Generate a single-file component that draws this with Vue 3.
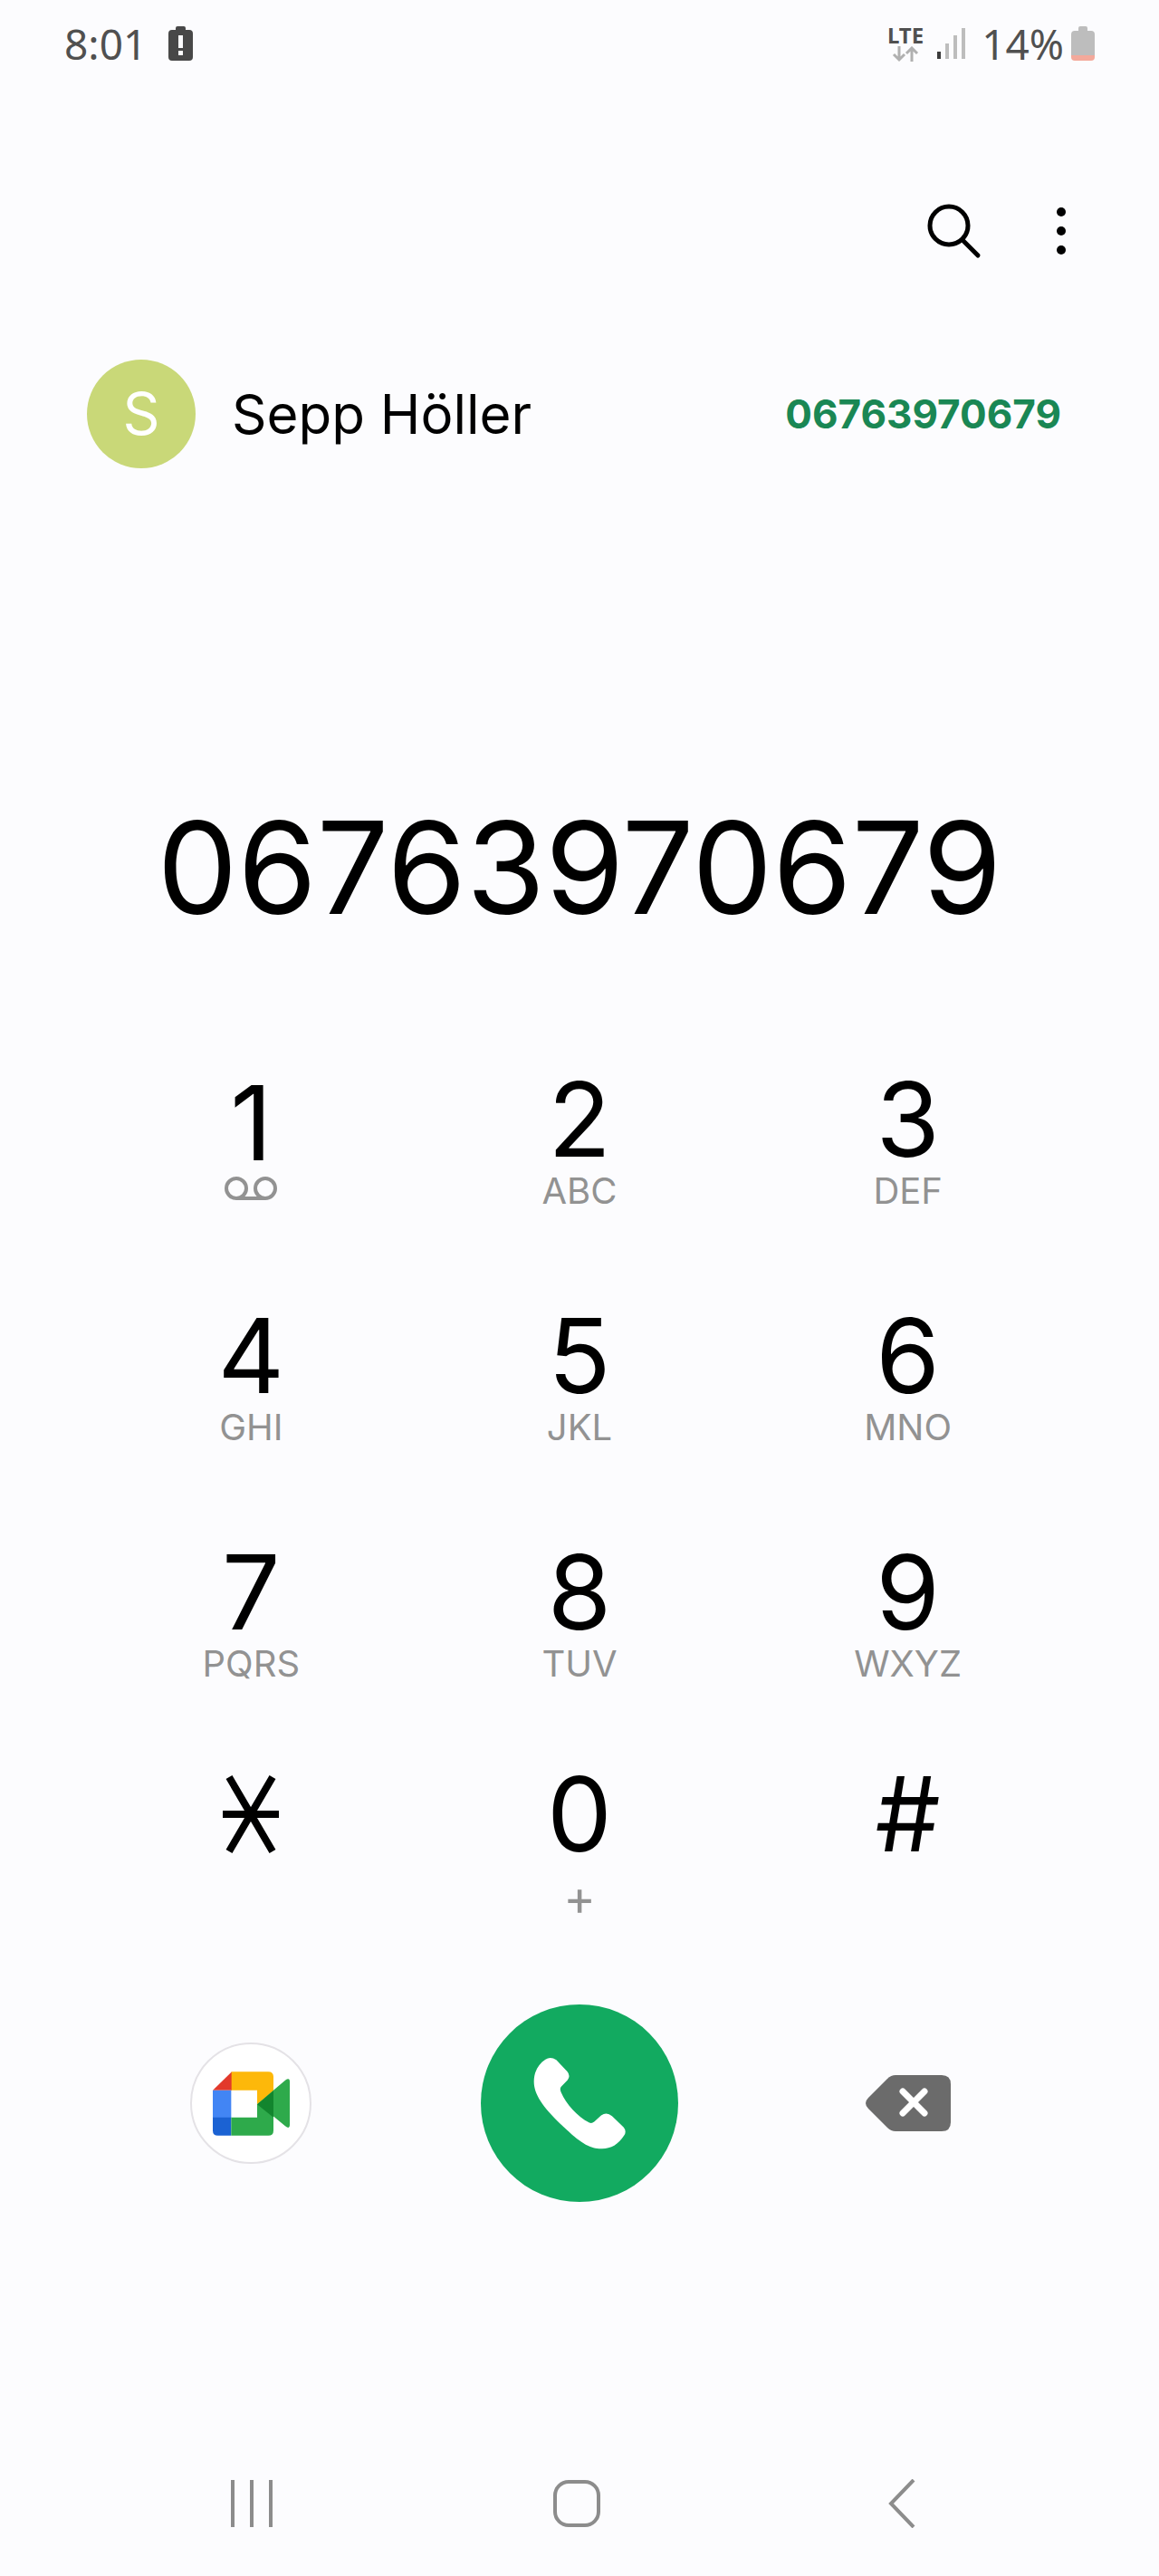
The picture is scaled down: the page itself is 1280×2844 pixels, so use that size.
<script setup>
import { ref } from 'vue'

const number = ref('06763970679')
const keys = [
  { digit: '1', voicemail: true },
  { digit: '2', letters: 'ABC' },
  { digit: '3', letters: 'DEF' },
  { digit: '4', letters: 'GHI' },
  { digit: '5', letters: 'JKL' },
  { digit: '6', letters: 'MNO' },
  { digit: '7', letters: 'PQRS' },
  { digit: '8', letters: 'TUV' },
  { digit: '9', letters: 'WXYZ' },
  { digit: '*', bottom: true },
  { digit: '0', letters: '+', bottom: true },
  { digit: '#', bottom: true }
]

function press(digit) {
  number.value += digit
}
function erase() {
  number.value = number.value.slice(0, -1)
}
</script>

<template>
  <div class="phone">
    <header class="status">
      <div class="status-side">
        <span class="status-text">8:01</span>
        <svg class="alert" viewBox="0 0 27 38" aria-hidden="true">
          <path d="M8 4V2Q8 0 10 0H17Q19 0 19 2V4H23Q27 4 27 8V34Q27 38 23 38H4Q0 38 0 34V8Q0 4 4 4Z" fill="#484848" />
          <path d="M11 10H16V24H11ZM11 27H16V32H11Z" fill="#fcfcfe" />
        </svg>
      </div>
      <div class="status-side">
        <div class="network">
          <span class="lte">LTE</span>
          <svg class="arrows" viewBox="0 0 30 18" aria-hidden="true">
            <path d="M8 0V15M2 9L8 15L14 9M22 17V2M16 8L22 2L28 8" fill="none" stroke="#b0b0b0" stroke-width="3" />
          </svg>
        </div>
        <svg class="signal" viewBox="0 0 34 34" aria-hidden="true">
          <path d="M1 26H5V34H1Z" fill="#3c3c3c" />
          <path d="M10 17H14V34H10ZM19 8H23V34H19ZM28 0H32V34H28Z" fill="#bdbdbd" />
        </svg>
        <span class="status-text">14%</span>
        <svg class="battery" viewBox="0 0 26 38" aria-hidden="true">
          <path d="M8 5V2Q8 0 10 0H16Q18 0 18 2V5H22Q26 5 26 9V32H0V9Q0 5 4 5Z" fill="#bdbdbd" />
          <path d="M0 32H26V34Q26 38 22 38H4Q0 38 0 34Z" fill="#f3a99b" />
        </svg>
      </div>
    </header>

    <div class="toolbar">
      <button class="icon-button" aria-label="Search">
        <svg class="search" viewBox="0 0 60 62">
          <circle cx="24" cy="25" r="21" fill="none" stroke="#000" stroke-width="5" />
          <path d="M39 41L56 58" stroke="#000" stroke-width="5" stroke-linecap="round" />
        </svg>
      </button>
      <button class="icon-button" aria-label="More options">
        <svg class="dots" viewBox="0 0 12 54">
          <circle cx="6" cy="6" r="5" />
          <circle cx="6" cy="27" r="5" />
          <circle cx="6" cy="48" r="5" />
        </svg>
      </button>
    </div>

    <main class="dialer">
      <a class="contact" href="#">
        <span class="avatar">S</span>
        <span class="name">Sepp Höller</span>
        <span class="match">06763970679</span>
      </a>

      <output class="number">{{ number }}</output>

      <div class="keypad">
        <button v-for="key in keys" :key="key.digit" class="key" :aria-label="key.digit" @click="press(key.digit)">
          <svg v-if="key.digit === '*'" class="star" viewBox="0 0 64 114">
            <path d="M1 57H63M8 16L56 98M56 16L8 98" stroke="#000" stroke-width="8" />
          </svg>
          <span v-else class="digit">{{ key.digit }}</span>
          <svg v-if="key.voicemail" class="voicemail" viewBox="0 0 60 36">
            <circle cx="14" cy="15" r="11" />
            <circle cx="46" cy="15" r="11" />
            <path d="M14 26H46" />
          </svg>
          <span v-else class="letters" :class="{ tall: key.bottom, plus: key.letters === '+' }">{{ key.letters }}</span>
        </button>
      </div>

      <div class="actions">
        <button class="meet" aria-label="Video call">
          <svg class="meet-logo" viewBox="0 0 255 212">
            <path d="M0 62L63 0V62Z" fill="#e2392b" />
            <path d="M62 0H184Q201 0 201 17V64L147 108V62H62Z" fill="#fdb80a" />
            <path d="M0 62H61V153H0Z" fill="#4285f4" />
            <path d="M0 152H61V212H17Q0 212 0 195Z" fill="#1b62d3" />
            <path d="M61 152H147V108L201 62L240 29Q255 18 255 34V176Q255 192 240 180L201 148V195Q201 212 184 212H61Z" fill="#2eaa4b" />
            <path d="M147 108L201 63V152Z" fill="#12852e" />
          </svg>
        </button>
        <button class="call" aria-label="Call">
          <svg class="handset" viewBox="0 0 305 305">
            <path d="M40 8Q57 -3 76 10L112 48Q124 62 113 76L92 98Q86 105 92 117C108 155 145 195 185 217Q193 221 201 214L224 193Q242 180 260 195L298 232Q309 245 300 259C280 290 255 304 224 303C190 303 160 287 110 240C50 185 10 140 3 95C-2 60 12 25 40 8Z" fill="#fff" />
          </svg>
        </button>
        <button class="icon-button" aria-label="Backspace" @click="erase">
          <svg class="backspace" viewBox="0 0 94 62">
            <path d="M33 0H84Q94 0 94 10V52Q94 62 84 62H33Q28 62 24 58L3 37Q-3 31 3 25L24 4Q28 0 33 0Z" fill="#6b6b6b" />
            <path d="M41 18L65 42M65 18L41 42" stroke="#fff" stroke-width="7" stroke-linecap="round" />
          </svg>
        </button>
      </div>
    </main>

    <nav class="system">
      <button class="icon-button" aria-label="Recent apps">
        <svg class="nav-icon" viewBox="0 0 54 54">
          <path d="M6 1V53M27 1V53M48 1V53" />
        </svg>
      </button>
      <button class="icon-button" aria-label="Home">
        <svg class="nav-icon" viewBox="0 0 54 54">
          <rect x="3" y="3" width="48" height="48" rx="15" />
        </svg>
      </button>
      <button class="icon-button" aria-label="Back">
        <svg class="nav-icon" viewBox="0 0 54 54">
          <path d="M40 1L15 27L40 53" />
        </svg>
      </button>
    </nav>
  </div>
</template>

<style>
body {
  margin: 0;
  background: #fcfcfe;
}
</style>

<style scoped>
.phone {
  display: flex;
  flex-direction: column;
  min-height: 100vh;
  background: #fcfcfe;
  color: #000;
  font-family: Inter, "Liberation Sans", sans-serif;
}
button {
  margin: 0;
  padding: 0;
  border: 0;
  background: none;
  color: inherit;
  font: inherit;
  cursor: pointer;
}
svg {
  display: block;
  flex: none;
}
.status {
  display: flex;
  justify-content: space-between;
  height: 95px;
  padding: 0 71px;
  color: #505050;
  font-family: "Noto Sans", sans-serif;
}
.status-side {
  display: flex;
  align-items: center;
}
.status-text {
  font-size: 46px;
  line-height: 64px;
}
.alert {
  width: 27px;
  height: 38px;
  margin-left: 24px;
}
.network {
  display: flex;
  flex-direction: column;
  align-items: center;
}
.lte {
  font-size: 24px;
  font-weight: 700;
  line-height: 24px;
}
.arrows {
  width: 30px;
  height: 18px;
}
.signal {
  width: 34px;
  height: 34px;
  margin: 0 16px 0 14px;
}
.battery {
  width: 26px;
  height: 38px;
  margin-left: 8px;
}
.icon-button {
  display: flex;
  align-items: center;
  justify-content: center;
}
.toolbar {
  display: flex;
  justify-content: flex-end;
  gap: 82px;
  height: 120px;
  margin-top: 100px;
  padding: 0 102px;
}
.search {
  width: 60px;
  height: 62px;
}
.dots {
  width: 12px;
  height: 54px;
}
.dialer {
  display: flex;
  flex-direction: column;
}
.contact {
  display: flex;
  align-items: center;
  margin-top: 82px;
  padding: 0 108px 0 96px;
  color: inherit;
  text-decoration: none;
}
.avatar {
  width: 120px;
  border-radius: 50%;
  background: #c9d878;
  color: #fff;
  font-size: 64px;
  line-height: 120px;
  text-align: center;
}
.name {
  flex: 1;
  margin-left: 40px;
  font-size: 60px;
  line-height: 80px;
}
.match {
  color: #1a8754;
  font-size: 44px;
  font-weight: 700;
  line-height: 80px;
}
.number {
  margin-top: 371px;
  font-size: 141px;
  line-height: 140px;
  text-align: center;
}
.keypad {
  display: grid;
  grid-template-columns: repeat(3, 1fr);
  grid-auto-rows: 261px;
  margin-top: 99px;
  padding: 0 96px;
}
.key {
  display: flex;
  flex-direction: column;
  align-items: center;
  justify-content: center;
}
.digit {
  font-size: 114px;
  line-height: 114px;
}
.star {
  width: 64px;
  height: 114px;
}
.letters {
  color: #929292;
  font-size: 40px;
  line-height: 44px;
}
.tall {
  height: 76px;
  line-height: 70px;
}
.plus {
  font-size: 54px;
}
.voicemail {
  width: 60px;
  height: 36px;
  fill: none;
  stroke: #929292;
  stroke-width: 4px;
}
.actions {
  display: grid;
  grid-template-columns: repeat(3, 1fr);
  align-items: center;
  justify-items: center;
  margin-top: 42px;
  padding: 0 96px;
}
.meet {
  display: flex;
  align-items: center;
  justify-content: center;
  width: 134px;
  height: 134px;
  border: 2px solid #e4e2e6;
  border-radius: 50%;
  background: #fff;
}
.meet-logo {
  width: 85px;
  height: 71px;
}
.call {
  display: flex;
  align-items: center;
  justify-content: center;
  width: 218px;
  height: 218px;
  border-radius: 50%;
  background: #12aa60;
}
.handset {
  width: 102px;
  height: 102px;
}
.backspace {
  width: 94px;
  height: 62px;
}
.system {
  display: grid;
  grid-template-columns: repeat(3, 1fr);
  height: 160px;
  margin-top: auto;
  padding: 0 105px 0 99px;
}
.nav-icon {
  width: 54px;
  height: 54px;
  fill: none;
  stroke: #8c8c8c;
  stroke-width: 4px;
}
</style>
